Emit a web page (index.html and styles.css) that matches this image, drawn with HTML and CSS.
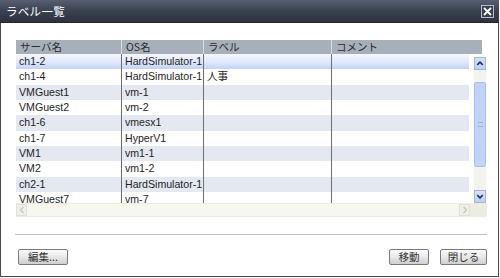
FILE: index.html
```html
<!DOCTYPE html>
<html lang="ja">
<head>
<meta charset="utf-8">
<link rel="stylesheet" href="styles.css">
</head>
<body>
<div class="window">
  <div class="titlebar">
    <span class="title">ラベル一覧</span>
    <span class="close"><svg width="11" height="11" viewBox="0 0 11 11"><path d="M2 2 L9 9 M9 2 L2 9" stroke="#fff" stroke-width="1.8" fill="none"/></svg></span>
  </div>
  <div class="content">
    <div class="grid">
      <div class="head">
        <div class="hc c1">サーバ名</div>
        <div class="hc c2">OS名</div>
        <div class="hc c3">ラベル</div>
        <div class="hc c4h">コメント</div>
      </div>
      <div class="bodywrap">
        <div class="rows">
          <div class="row sel"><div class="c c1">ch1-2</div><div class="c c2">HardSimulator-1</div><div class="c c3"></div><div class="c c4"></div></div>
          <div class="row"><div class="c c1">ch1-4</div><div class="c c2">HardSimulator-1</div><div class="c c3">人事</div><div class="c c4"></div></div>
          <div class="row alt"><div class="c c1">VMGuest1</div><div class="c c2">vm-1</div><div class="c c3"></div><div class="c c4"></div></div>
          <div class="row"><div class="c c1">VMGuest2</div><div class="c c2">vm-2</div><div class="c c3"></div><div class="c c4"></div></div>
          <div class="row alt"><div class="c c1">ch1-6</div><div class="c c2">vmesx1</div><div class="c c3"></div><div class="c c4"></div></div>
          <div class="row"><div class="c c1">ch1-7</div><div class="c c2">HyperV1</div><div class="c c3"></div><div class="c c4"></div></div>
          <div class="row alt"><div class="c c1">VM1</div><div class="c c2">vm1-1</div><div class="c c3"></div><div class="c c4"></div></div>
          <div class="row"><div class="c c1">VM2</div><div class="c c2">vm1-2</div><div class="c c3"></div><div class="c c4"></div></div>
          <div class="row alt"><div class="c c1">ch2-1</div><div class="c c2">HardSimulator-1</div><div class="c c3"></div><div class="c c4"></div></div>
          <div class="row"><div class="c c1">VMGuest7</div><div class="c c2">vm-7</div><div class="c c3"></div><div class="c c4"></div></div>
        </div>
        <div class="vscroll">
          <div class="vbtn"><svg width="11" height="11" viewBox="0 0 11 11"><path d="M2.5 7 L5.5 4 L8.5 7" stroke="#1f2d4f" stroke-width="1.6" fill="none"/></svg></div>
          <div class="vtrack">
            <div class="thumb"><span class="grip"></span></div>
          </div>
          <div class="vbtn"><svg width="11" height="11" viewBox="0 0 11 11"><path d="M2.5 4 L5.5 7 L8.5 4" stroke="#1f2d4f" stroke-width="1.6" fill="none"/></svg></div>
        </div>
      </div>
      <div class="hrow">
        <div class="hscroll">
          <div class="hbtn"><svg width="8" height="10" viewBox="0 0 8 10"><path d="M5.5 2 L2.5 5 L5.5 8" stroke="#c4c4bc" stroke-width="1.2" fill="none"/></svg></div>
          <div class="htrack"></div>
          <div class="hbtn"><svg width="8" height="10" viewBox="0 0 8 10"><path d="M2.5 2 L5.5 5 L2.5 8" stroke="#c4c4bc" stroke-width="1.2" fill="none"/></svg></div>
        </div>
        <div class="corner"></div>
      </div>
    </div>
    <div class="sep"></div>
    <div class="buttons">
      <button class="btn edit">編集...</button>
      <div class="right">
        <button class="btn move">移動</button>
        <button class="btn closebtn">閉じる</button>
      </div>
    </div>
  </div>
</div>
</body>
</html>
```

FILE: styles.css
```css
* { box-sizing: border-box; }
html, body { margin: 0; padding: 0; background: #ffffff; }
body {
  font-family: "Liberation Sans", "Noto Sans CJK JP", sans-serif;
  font-size: 11px;
  color: #222;
}
.window {
  width: 499px;
  height: 277px;
  border: 1px solid #4a4a4a;
  border-top: none;
  display: flex;
  flex-direction: column;
  background: #fff;
}
.titlebar {
  height: 23px;
  background: linear-gradient(#566072, #3a4150 50%, #2c323e);
  border-bottom: 1px solid #22262e;
  display: flex;
  align-items: center;
  justify-content: space-between;
  padding: 0 5px 0 6px;
  margin: 0 -1px;
}
.title {
  color: #fff;
  font-family: "Noto Sans CJK JP", sans-serif;
  font-size: 11.5px;
  letter-spacing: 0.3px;
}
.close {
  width: 13px;
  height: 13px;
  border: 1px solid #b6bcc8;
  background: #3a4150;
  display: flex;
  align-items: center;
  justify-content: center;
}
.content {
  flex: 1;
  padding: 17px 12px 0 15px;
  display: flex;
  flex-direction: column;
}
.grid { width: 471px; }
.head {
  width: 466px;
  height: 14px;
  background: #a7b0ba;
  display: flex;
}
.hc {
  font-family: "Noto Sans CJK JP", sans-serif;
  font-size: 10.5px;
  color: #2b2b2b;
  line-height: 14px;
  padding-left: 4px;
  border-right: 1px solid #d6dbe0;
  white-space: nowrap;
}
.c1 { width: 106px; }
.c2 { width: 82px; }
.c3 { width: 128px; }
.c4 { width: 137px; }
.c4h { width: 150px; border-right: none; }
.bodywrap {
  height: 149px;
  display: flex;
  overflow: hidden;
}
.rows { width: 453px; }
.row {
  height: 15.33px;
  display: flex;
}
.row.alt { background: #e3e8f1; }
.row.sel { background: linear-gradient(#f4f7fe, #dde6fb 60%, #c2d2f6); }
.c {
  height: 100%;
  line-height: 15px;
  padding-left: 3px;
  border-right: 1px solid #6e6e6e;
  white-space: nowrap;
  overflow: hidden;
  font-size: 10.6px;
  color: #1e1e1e;
}
.c.c4 { border-right: none; }
.vscroll {
  width: 12px;
  margin-left: 5px;
  margin-top: 3px;
  display: flex;
  flex-direction: column;
  background: #f4f4ef;
}
.vbtn {
  height: 13px;
  background: linear-gradient(#d6e2fb, #bccff6);
  border: 1px solid #9fb5e2;
  display: flex;
  align-items: center;
  justify-content: center;
}
.vtrack {
  flex: 1;
  padding-top: 12px;
  padding-bottom: 23px;
}
.thumb {
  height: 100%;
  background: #c1d3f7;
  border: 1px solid #a9bfee;
  border-radius: 2px;
  display: flex;
  align-items: center;
  justify-content: center;
}
.grip {
  width: 5px;
  height: 5px;
  border-top: 1px solid #9fb3de;
  border-bottom: 1px solid #9fb3de;
  position: relative;
}
.hrow {
  display: flex;
  height: 14px;
}
.hscroll {
  width: 454px;
  display: flex;
  background: #f7f6ef;
  border-top: 1px solid #ecebdf;
  border-bottom: 1px solid #ecebdf;
}
.hbtn {
  width: 11px;
  display: flex;
  align-items: center;
  justify-content: center;
  background: #efefe8;
  border: 1px solid #e2e1d6;
}
.htrack { flex: 1; }
.corner {
  width: 17px;
  background: #edece2;
}
.sep {
  height: 1px;
  background: #b8c2d6;
  margin: 17px 0 0 -1px;
  width: 472px;
}
.buttons {
  display: flex;
  justify-content: space-between;
  padding: 14px 0 0 2px;
  width: 471px;
}
.right { display: flex; gap: 11px; }
.btn {
  height: 16px;
  padding: 0;
  font-family: "Noto Sans CJK JP", sans-serif;
  font-size: 10.5px;
  line-height: 14px;
  color: #333;
  background: linear-gradient(#fbfbfb, #e6e6e6 55%, #cfcfcf);
  border: 1px solid #7a7a7a;
  border-radius: 2px;
}
.edit { width: 50px; }
.move { width: 40px; }
.closebtn { width: 47px; }
```
